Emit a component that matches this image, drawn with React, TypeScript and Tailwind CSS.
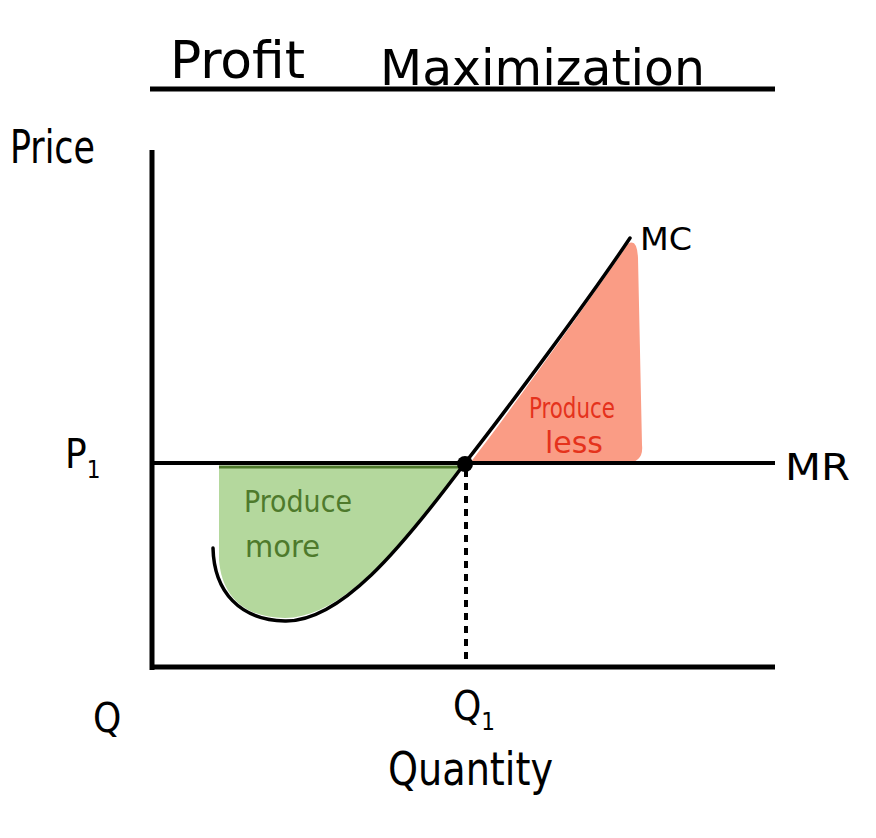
export default function App() {
  return (
    <div className="w-[876px] h-[838px] bg-white overflow-hidden">
      <svg
        width="876"
        height="838"
        viewBox="0 0 876 838"
        className="font-['DejaVu_Sans_Condensed','DejaVu_Sans',sans-serif]"
      >
        {/* title */}
        <text x="170" y="78" fontSize="52" textLength="135" lengthAdjust="spacingAndGlyphs" fill="#000">Profit</text>
        <text x="380" y="85" fontSize="50" textLength="325" lengthAdjust="spacingAndGlyphs" fill="#000">Maximization</text>
        <line x1="150" y1="89" x2="775" y2="89" stroke="#000" strokeWidth="5" />

        {/* shaded regions */}
        <path d="M219,467 L461,467 C400,550 340,618 285,618 C246,618 222,598 219,560 Z" fill="#b4d89d" />
        <path d="M219,467 L461,467" stroke="#4e7a2c" strokeWidth="3" />
        <path d="M470,463 C505,418 590,300 628,244 Q637,238 638,258 L642,445 Q644,463 625,463 Z" fill="#fa9c85" />

        {/* axes */}
        <line x1="152" y1="150" x2="152" y2="670" stroke="#000" strokeWidth="5" />
        <line x1="150" y1="667" x2="775" y2="667" stroke="#000" strokeWidth="5" />
        <line x1="152" y1="463" x2="775" y2="463" stroke="#000" strokeWidth="4" />
        <line x1="466" y1="470" x2="466" y2="665" stroke="#000" strokeWidth="4" strokeDasharray="7 6" />

        {/* MC curve */}
        <path
          d="M213,548 C214,592 240,620 285,621 C340,622 400,550 465,463 C505,412 590,298 630,238"
          fill="none"
          stroke="#000"
          strokeWidth="3.5"
          strokeLinecap="round"
        />
        <circle cx="465" cy="464" r="8" fill="#000" />

        {/* labels */}
        <text x="10" y="163" fontSize="46" textLength="85" lengthAdjust="spacingAndGlyphs" fill="#000">Price</text>
        <text x="640" y="250" fontSize="32" textLength="52" lengthAdjust="spacingAndGlyphs" fill="#000">MC</text>
        <text x="785" y="480" fontSize="38" textLength="65" lengthAdjust="spacingAndGlyphs" fill="#000">MR</text>
        <text x="65" y="468" fontSize="40" fill="#000">
          P<tspan fontSize="24" dy="10">1</tspan>
        </text>
        <text x="93" y="732" fontSize="40" fill="#000">Q</text>
        <text x="453" y="720" fontSize="40" fill="#000">
          Q<tspan fontSize="24" dy="10">1</tspan>
        </text>
        <text x="388" y="785" fontSize="46" textLength="165" lengthAdjust="spacingAndGlyphs" fill="#000">Quantity</text>

        <text x="244" y="512" fontSize="31" textLength="108" lengthAdjust="spacingAndGlyphs" fill="#4e7a2c">Produce</text>
        <text x="245" y="557" fontSize="31" textLength="75" lengthAdjust="spacingAndGlyphs" fill="#4e7a2c">more</text>

        <text x="529" y="418" fontSize="28" textLength="86" lengthAdjust="spacingAndGlyphs" fill="#e5321c">Produce</text>
        <text x="545" y="453" fontSize="30" textLength="58" lengthAdjust="spacingAndGlyphs" fill="#e5321c">less</text>
      </svg>
    </div>
  )
}
